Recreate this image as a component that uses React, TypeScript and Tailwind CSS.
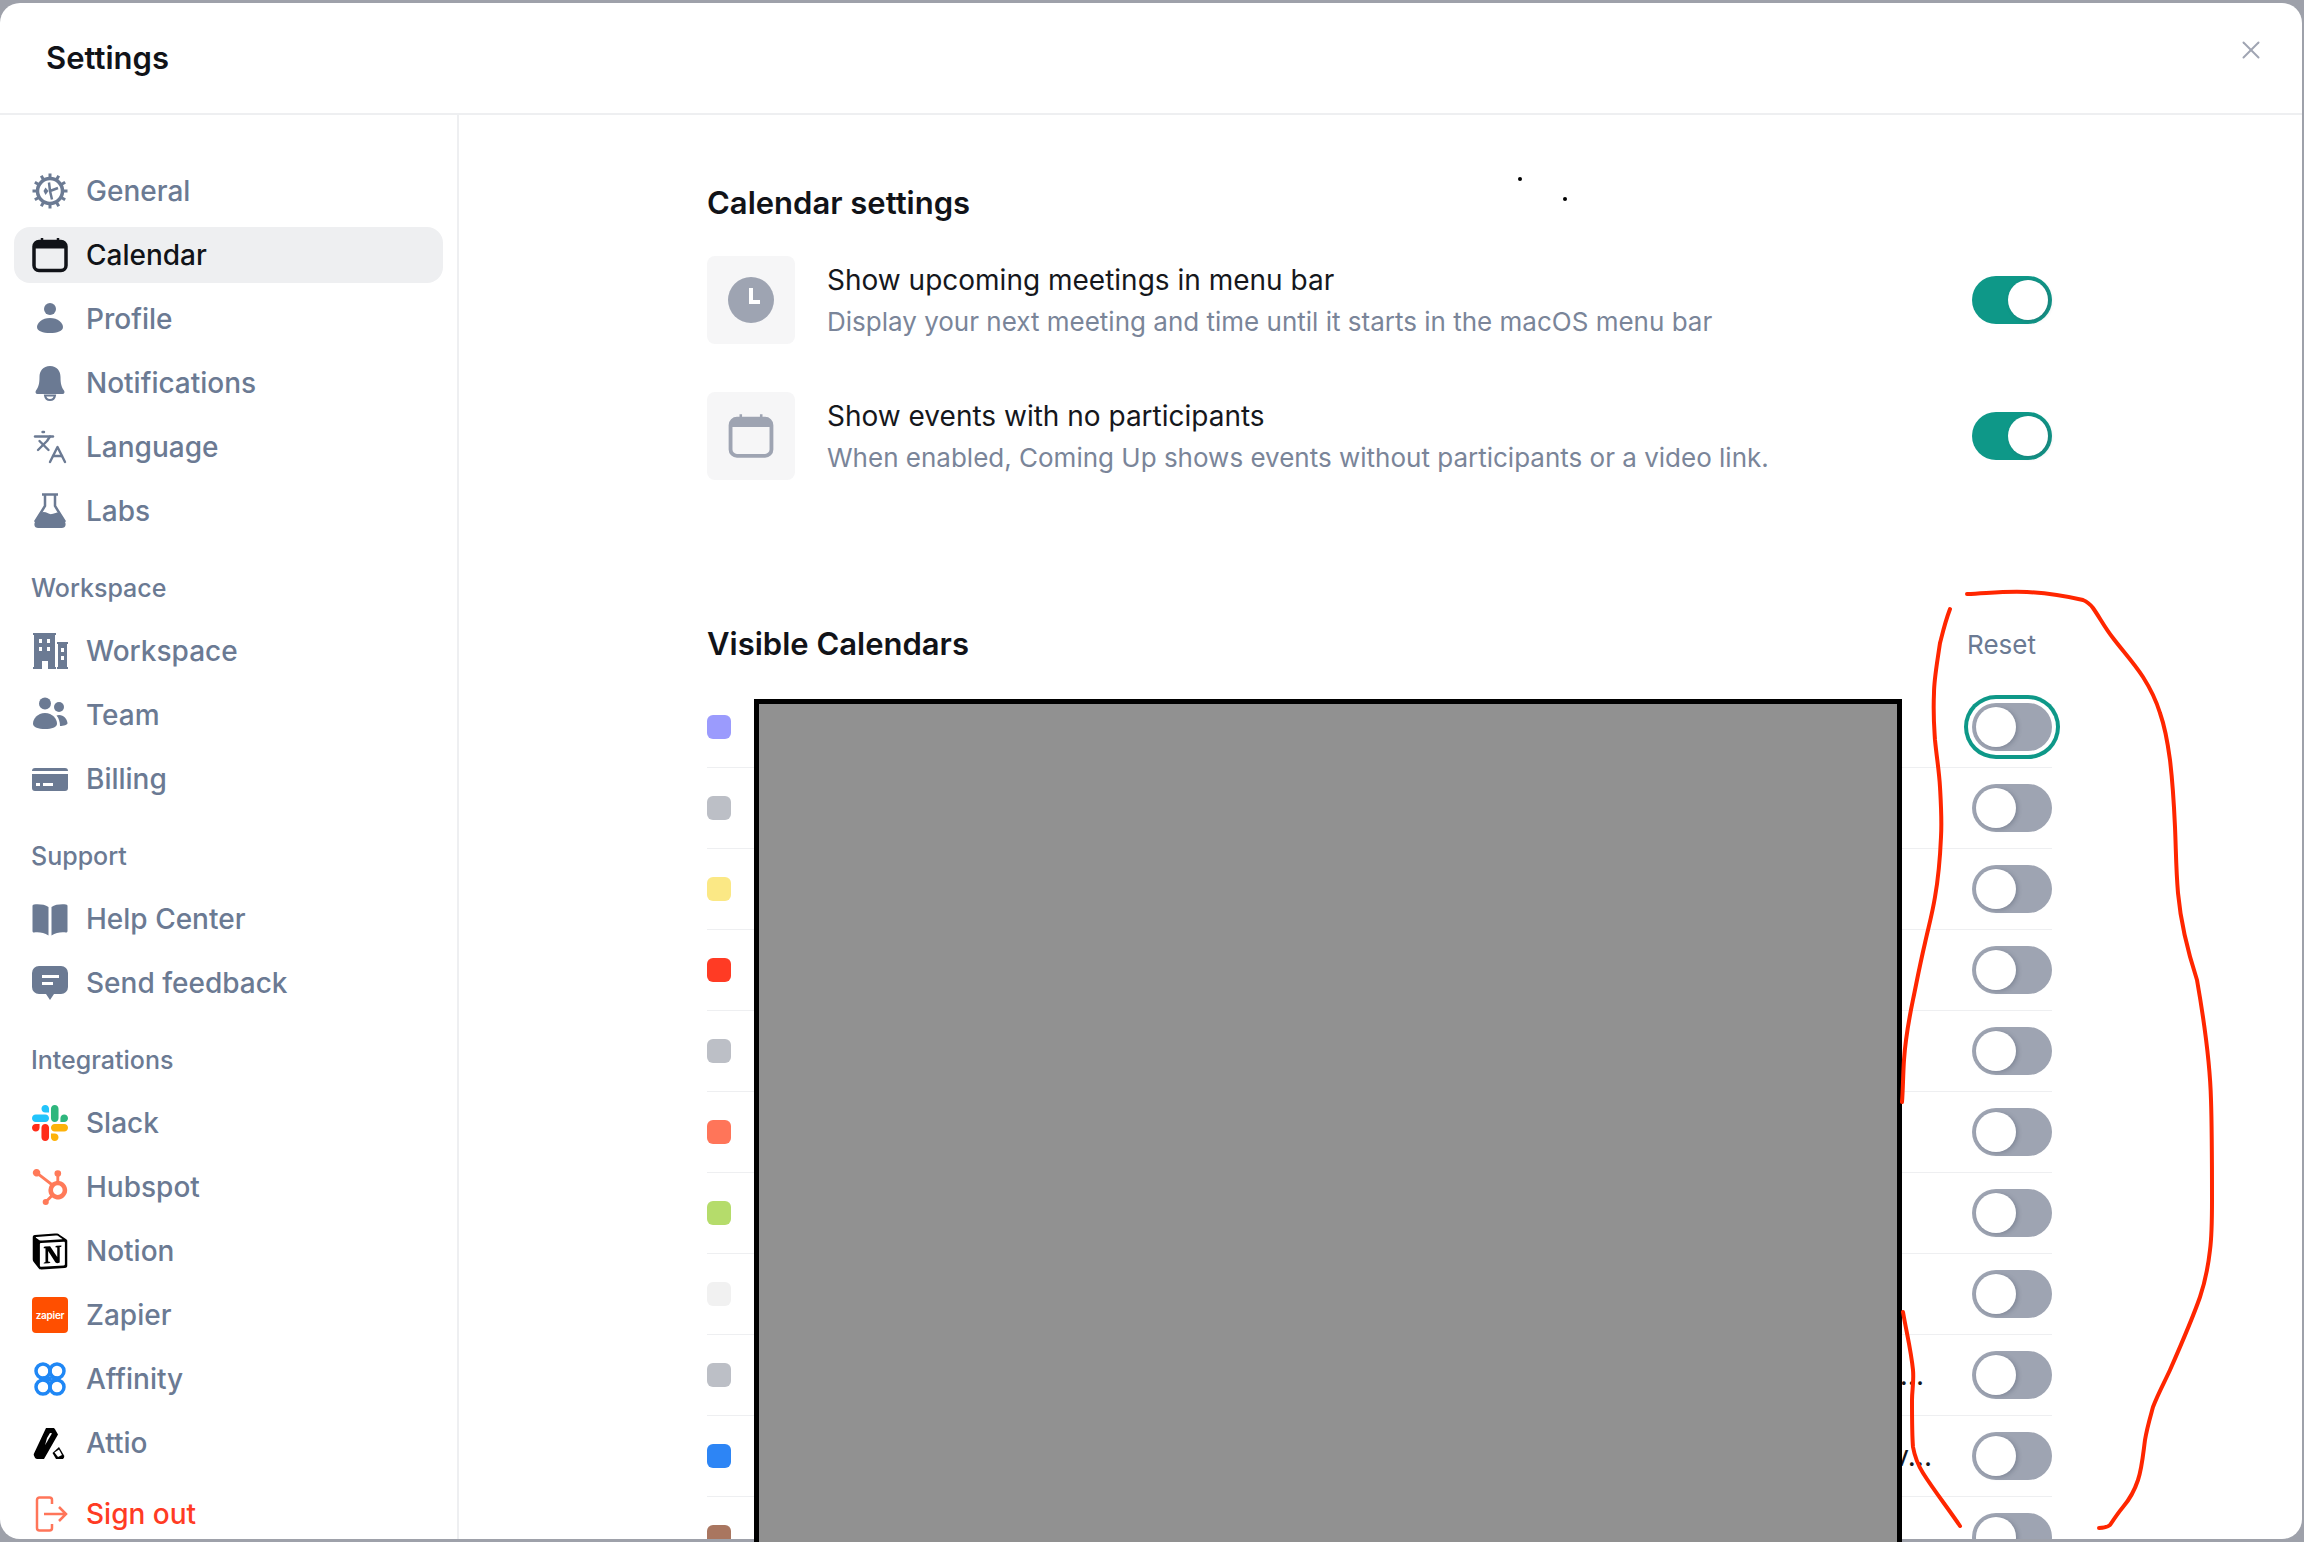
import { ReactNode } from 'react';
import { Languages, X } from 'lucide-react';
import { SiHubspot, SiNotion } from 'react-icons/si';

const svgProps = { width: 36, height: 36, viewBox: '0 0 36 36' };

const GearIcon = () => (
    <svg {...svgProps} fill="none" stroke="currentColor">
        <circle cx="18" cy="18" r="12.5" strokeWidth="3.5" />
        {[0, 30, 60, 90, 120, 150, 180, 210, 240, 270, 300, 330].map(a => (
            <line key={a} x1="18" y1="0.5" x2="18" y2="5" strokeWidth="3" transform={`rotate(${a} 18 18)`} />
        ))}
        <path d="M18 18l8-3M18 18l-1-8.5M18 18l2 8.5" strokeWidth="2.5" />
        <path d="M13.5 14.5l3 3.5-3 4-2-4z" fill="currentColor" stroke="none" />
    </svg>
);

const CalendarIcon = ({ stroke = 3.5 }: { stroke?: number }) => (
    <svg {...svgProps} fill="none" stroke="currentColor">
        <rect x="2" y="4.5" width="32" height="29" rx="5" strokeWidth={stroke} />
        <path d="M3 11V8a4 4 0 0 1 4-3h22a4 4 0 0 1 4 3v3z" fill="currentColor" stroke="none" />
        <path d="M3 10h30" strokeWidth="3" />
        <path d="M10 1v5M26 1v5" strokeWidth="2.5" />
    </svg>
);

const ProfileIcon = () => (
    <svg {...svgProps} fill="currentColor">
        <circle cx="18" cy="8" r="6" />
        <path d="M18 17c8 0 13 5 13 9 0 4-6 6-13 6S5 30 5 26c0-4 5-9 13-9z" />
    </svg>
);

const BellIcon = () => (
    <svg {...svgProps} fill="currentColor">
        <path d="M18 1c7 0 10.500 5 10.500 11 0 7 1 10 3.500 13.500 1 1.500.5 3.500-1.500 3.500H5.500C3.500 29 3 27 4 25.500 6.500 22 7.500 19 7.500 12 7.500 6 11 1 18 1z" />
        <path d="M13 30.500h10c-.5 3-2.500 4.500-5 4.500s-4.500-1.500-5-4.500z" fill="none" stroke="currentColor" strokeWidth="2" />
    </svg>
);

const FlaskIcon = () => (
    <svg {...svgProps} fill="currentColor">
        <path d="M10 1.500h16" stroke="currentColor" strokeWidth="2.500" />
        <path d="M13 2v11L3 29" fill="none" stroke="currentColor" strokeWidth="2.500" />
        <path d="M23 2v11l10 16" fill="none" stroke="currentColor" strokeWidth="2.500" />
        <path d="M8 20c6-3 8 2 12 1s6-2 8-1l5 9c1.500 3 0 6-3 6H6c-3 0-4.500-3-3-6z" />
    </svg>
);

const BuildingIcon = () => (
    <svg {...svgProps} fill="currentColor">
        <path fillRule="evenodd" d="M1 0h23v2h-1v32h1v2h-8v-8h-6v8H1v-2h1V2H1zM7 6v4h3V6zm8 0v4h3V6zM7 14v4h3v-4zm8 0v4h3v-4z" />
        <path fillRule="evenodd" d="M25 9h11v2h-1v23h1v2H25v-2h1V11h-1zm4 6v4h3v-4zm0 8v4h3v-4z" />
    </svg>
);

const TeamIcon = () => (
    <svg {...svgProps} fill="currentColor">
        <circle cx="13" cy="6.500" r="6" />
        <circle cx="27" cy="10" r="5" />
        <path d="M13 16c7.500 0 12 6 12 10.500 0 4-5.500 5.500-12 5.500S1 30.500 1 26.500C1 22 5.500 16 13 16z" />
        <path d="M27 18c5 0 8 4 8.500 8 .2 2-4 3-7.500 3 0-4-1-7.500-3.500-10.500.8-.3 1.600-.5 2.500-.5z" />
    </svg>
);

const CardIcon = () => (
    <svg width="36" height="24" viewBox="0 0 36 24" fill="currentColor">
        <path d="M0 4a3 3 0 0 1 3-3h30a3 3 0 0 1 3 3v0H0z" />
        <path fillRule="evenodd" d="M0 7h36v14a3 3 0 0 1-3 3H3a3 3 0 0 1-3-3zm4 9v3h4v-3zm7 0v3h10v-3z" />
    </svg>
);

const BookIcon = () => (
    <svg {...svgProps} fill="currentColor">
        <path d="M16.500 6C13 3.500 7 3 2 3.500c-1 .1-1.500.8-1.500 1.500v25c0 1 .8 1.500 1.500 1.500 5-.5 10 0 14.500 3z" />
        <path d="M19.500 6c3.500-2.500 9.500-3 14.500-2.500 1 .1 1.500.8 1.500 1.500v25c0 1-.8 1.500-1.500 1.500-5-.5-10 0-14.500 3z" />
    </svg>
);

const FeedbackIcon = () => (
    <svg {...svgProps} fill="currentColor">
        <path fillRule="evenodd" d="M7 1h22a7 7 0 0 1 7 7v14a7 7 0 0 1-7 7h-7l-4 6-4-6H7a7 7 0 0 1-7-7V8a7 7 0 0 1 7-7zm3 9v3h17v-3zm0 7v3h11v-3z" />
    </svg>
);

const SlackIcon = () => (
    <svg width="36" height="36" viewBox="0 0 122.8 122.8">
        <path fill="#ff2d1a" d="M25.800 77.600c0 7.100-5.800 12.900-12.900 12.900S0 84.700 0 77.600s5.800-12.900 12.900-12.900h12.900v12.900zm6.500 0c0-7.100 5.800-12.900 12.900-12.900s12.900 5.800 12.900 12.900v32.300c0 7.100-5.800 12.900-12.900 12.900s-12.900-5.800-12.900-12.900V77.600z" />
        <path fill="#22c4fb" d="M45.200 25.800c-7.100 0-12.900-5.800-12.900-12.900S38.100 0 45.200 0s12.900 5.800 12.900 12.900v12.900H45.200zm0 6.500c7.100 0 12.900 5.800 12.900 12.900s-5.800 12.900-12.900 12.900H12.900C5.800 58.100 0 52.300 0 45.200s5.800-12.900 12.900-12.900h32.300z" />
        <path fill="#2eb67d" d="M97 45.200c0-7.100 5.800-12.900 12.900-12.900s12.900 5.800 12.900 12.900-5.800 12.900-12.900 12.900H97V45.200zm-6.500 0c0 7.100-5.800 12.900-12.900 12.900s-12.900-5.800-12.900-12.900V12.900C64.700 5.800 70.500 0 77.600 0s12.900 5.800 12.900 12.900v32.300z" />
        <path fill="#fdb20a" d="M77.600 97c7.100 0 12.900 5.800 12.900 12.900s-5.800 12.900-12.900 12.900-12.900-5.800-12.900-12.900V97h12.900zm0-6.500c-7.100 0-12.900-5.800-12.900-12.900s5.800-12.900 12.900-12.900h32.300c7.100 0 12.900 5.800 12.900 12.900s-5.800 12.900-12.900 12.900H77.600z" />
    </svg>
);

const ZapierIcon = () => (
    <div className="w-[36px] h-[36px] rounded-[4px] bg-[#ff4f00] flex items-center justify-center">
        <span className="text-white text-[10px] font-semibold tracking-tight">zapier</span>
    </div>
);

const AffinityIcon = () => (
    <svg {...svgProps} fill="none" stroke="#1f87f5" strokeWidth="3.500">
        <circle cx="11" cy="10" r="7" />
        <circle cx="25" cy="10" r="7" />
        <circle cx="11" cy="26" r="7" />
        <circle cx="25" cy="26" r="7" />
        <path d="M11 17c3 0 7 4 7 1s4-1 7-1M11 19c3 0 7-4 7-1s4 1 7 1" strokeWidth="3" />
    </svg>
);

const AttioIcon = () => (
    <svg {...svgProps} fill="#000">
        <path d="M14 3h7c1 0 1.500.5 2 1.200l3 5.300-14 24.500H5c-1 0-1.500-.5-2-1.200l-1-2c-.4-.8-.4-1.400 0-2.200z" />
        <path fill="#fff" d="M15 13l3-5 2 .3-7 12z" />
        <path d="M27 22l5 8.500c.3.700.3 1.300 0 2L31 34h-7l-3.500-6z" />
        <path fill="#fff" d="M22.500 27.500l4.500-3 3 5.500-4 2z" />
    </svg>
);

const SignOutIcon = () => (
    <svg {...svgProps} fill="none" stroke="#ff7559" strokeWidth="2.500">
        <path d="M20 8V4a2.500 2.500 0 0 0-2.500-2.500h-10A2.500 2.500 0 0 0 5 4v28a2.500 2.500 0 0 0 2.500 2.500h10A2.500 2.500 0 0 0 20 32v-4" />
        <path d="M12 18h22M27 11l7 7-7 7" />
    </svg>
);

type NavItem = { label: string; icon: ReactNode; active?: boolean };

const mainItems: NavItem[] = [
    { label: 'General', icon: <GearIcon /> },
    { label: 'Calendar', icon: <CalendarIcon />, active: true },
    { label: 'Profile', icon: <ProfileIcon /> },
    { label: 'Notifications', icon: <BellIcon /> },
    { label: 'Language', icon: <Languages size={38} strokeWidth={1.6} /> },
    { label: 'Labs', icon: <FlaskIcon /> },
];

const workspaceItems: NavItem[] = [
    { label: 'Workspace', icon: <BuildingIcon /> },
    { label: 'Team', icon: <TeamIcon /> },
    { label: 'Billing', icon: <CardIcon /> },
];

const supportItems: NavItem[] = [
    { label: 'Help Center', icon: <BookIcon /> },
    { label: 'Send feedback', icon: <FeedbackIcon /> },
];

const integrationItems: NavItem[] = [
    { label: 'Slack', icon: <SlackIcon /> },
    { label: 'Hubspot', icon: <SiHubspot size={40} color="#ff7a59" /> },
    { label: 'Notion', icon: <SiNotion size={39} color="#000" /> },
    { label: 'Zapier', icon: <ZapierIcon /> },
    { label: 'Affinity', icon: <AffinityIcon /> },
    { label: 'Attio', icon: <AttioIcon /> },
];

const calendars = [
    { color: 'bg-[#9b9bfd]' },
    { color: 'bg-[#bcbfc6]' },
    { color: 'bg-[#fbe885]' },
    { color: 'bg-[#ff3b24]' },
    { color: 'bg-[#bcbfc6]' },
    { color: 'bg-[#ff7559]' },
    { color: 'bg-[#b5dc6b]' },
    { color: 'bg-[#f1f1f1]' },
    { color: 'bg-[#bcbfc6]', tail: 't...', tailClass: 'mr-[48px]' },
    { color: 'bg-[#2d85f5]', tail: 'v...', tailClass: 'mr-[40px]' },
    { color: 'bg-[#a97660]' },
];

const NavRow = ({ item }: { item: NavItem }) => (
    <div className={`h-[56px] shrink-0 mx-[14px] px-[18px] flex items-center gap-[18px] rounded-[16px] text-[28px] font-medium ${item.active ? 'bg-[#eeeff1] text-[#111318]' : 'text-[#6b7a93]'}`}>
        <div className="w-[36px] h-[36px] shrink-0 flex items-center justify-center">{item.icon}</div>
        <span>{item.label}</span>
    </div>
);

const NavGroup = ({ title, items }: { title?: string; items: NavItem[] }) => (
    <div className="flex flex-col">
        {title && <div className="h-[36px] mt-[32px] mb-[16px] px-[31px] flex items-center text-[25px] font-medium text-[#6b7a93]">{title}</div>}
        <div className="flex flex-col gap-[8px]">
            {items.map(item => <NavRow key={item.label} item={item} />)}
        </div>
    </div>
);

const Toggle = ({ on, focused }: { on?: boolean; focused?: boolean }) => (
    <div className={`w-[80px] h-[48px] shrink-0 rounded-full p-[4px] flex ${on ? 'bg-[#0e9888] justify-end' : 'bg-[#9ea4b2] justify-start'} ${focused ? 'ring-4 ring-[#0e9888] ring-offset-4 ring-offset-white' : ''}`}>
        <div className="w-[40px] h-[40px] rounded-full bg-white shadow-[2px_1px_4px_rgba(60,70,90,0.3)]" />
    </div>
);

const SettingRow = ({ icon, title, text }: { icon: ReactNode; title: string; text: string }) => (
    <div className="flex items-center h-[88px]">
        <div className="w-[88px] h-[88px] shrink-0 rounded-[8px] bg-[#f6f6f7] flex items-center justify-center text-[#9ea4b2]">{icon}</div>
        <div className="ml-[32px] flex-1 flex flex-col gap-[9px]">
            <div className="text-[28px] leading-[34px] text-[#15171c]">{title}</div>
            <div className="text-[26px] leading-[32px] text-[#7a8599]">{text}</div>
        </div>
        <Toggle on />
    </div>
);

const ClockIcon = () => (
    <svg width="46" height="46" viewBox="0 0 46 46">
        <circle cx="23" cy="23" r="23" fill="#9ea4b2" />
        <path d="M23 11v14h9" fill="none" stroke="#fff" strokeWidth="4" />
    </svg>
);

const Scribble = () => (
    <svg className="absolute top-0 left-0 pointer-events-none" width="2304" height="1542" fill="none" stroke="#ff2600" strokeWidth="4" strokeLinecap="round" strokeLinejoin="round">
        <path d="M1950 609C1944 625 1941 640 1940 643C1936 670 1934 680 1934 693C1933 715 1934 725 1935 740C1937 760 1939 770 1940 787C1941 805 1942 820 1941 837C1940 860 1938 880 1935 897C1932 915 1929 925 1925 943C1921 960 1919 970 1916 985C1910 1015 1906 1030 1904 1060C1903 1075 1903 1090 1902 1102" />
        <path d="M1903 1312C1907 1335 1911 1350 1913 1370C1914 1382 1912 1390 1912 1400C1912 1420 1912 1435 1913 1447C1915 1458 1918 1465 1923 1473C1935 1492 1948 1508 1960 1526" />
        <path d="M1967 594C1990 593 2005 591 2027 592C2050 593 2070 597 2083 600C2088 602 2090 604 2093 608C2100 618 2105 628 2113 638C2122 650 2134 663 2143 677C2150 688 2156 700 2160 713C2166 730 2168 745 2170 760C2173 785 2174 805 2175 827C2176 850 2176 870 2178 893C2180 915 2184 940 2197 980C2204 1020 2210 1060 2211 1100C2212 1130 2212 1165 2212 1200C2212 1220 2212 1235 2210 1250C2208 1268 2205 1282 2200 1297C2192 1320 2181 1345 2170 1370C2164 1383 2158 1394 2153 1407C2150 1418 2147 1428 2145 1440C2143 1455 2142 1468 2138 1480C2134 1492 2129 1500 2123 1507C2118 1513 2114 1519 2110 1525C2106 1528 2103 1528 2099 1528" />
    </svg>
);

export default function App() {
    return (
        <div className="relative w-full h-[1542px] overflow-hidden bg-[#9ea1aa] pt-[3px] pr-[2px] pb-[3px] font-['Inter',sans-serif]">
            <div className="h-full rounded-[20px] bg-white overflow-hidden flex flex-col">
                <header className="h-[112px] shrink-0 border-b-2 border-[#eeeff1] flex items-center justify-between pl-[46px] pr-[36px]">
                    <h1 className="text-[31px] font-semibold text-[#111318]">Settings</h1>
                    <X className="text-[#a0a5b3] -mt-[16px]" size={30} strokeWidth={1.6} />
                </header>
                <div className="flex-1 flex min-h-0">
                    <aside className="w-[459px] shrink-0 border-r-2 border-[#eeeff1] pt-[48px] flex flex-col">
                        <NavGroup items={mainItems} />
                        <NavGroup title="Workspace" items={workspaceItems} />
                        <NavGroup title="Support" items={supportItems} />
                        <NavGroup title="Integrations" items={integrationItems} />
                        <div className="h-[56px] shrink-0 mt-[15px] mx-[14px] px-[18px] flex items-center gap-[18px] text-[28px] font-medium text-[#ff3b24]">
                            <SignOutIcon />
                            <span>Sign out</span>
                        </div>
                    </aside>
                    <main className="flex-1 min-w-0 pl-[248px] pr-[250px] pt-[68px]">
                        <h2 className="h-[40px] flex items-center text-[31px] font-semibold text-[#111318]">Calendar settings</h2>
                        <div className="mt-[33px] flex flex-col gap-[48px]">
                            <SettingRow icon={<ClockIcon />} title="Show upcoming meetings in menu bar" text="Display your next meeting and time until it starts in the macOS menu bar" />
                            <SettingRow icon={<div className="w-[46px] h-[46px] flex items-center justify-center"><svg width="46" height="46" viewBox="0 0 36 36" fill="none" stroke="currentColor"><rect x="2" y="4.500" width="32" height="29" rx="5" strokeWidth="3" /><path d="M3 11V8a4 4 0 0 1 4-3h22a4 4 0 0 1 4 3v3z" fill="currentColor" stroke="none" /><path d="M10 1v5M26 1v5" strokeWidth="2" /></svg></div>} title="Show events with no participants" text="When enabled, Coming Up shows events without participants or a video link." />
                        </div>
                        <div className="mt-[144px] mb-[23px] h-[40px] flex items-center justify-between">
                            <h2 className="text-[31px] font-semibold text-[#111318]">Visible Calendars</h2>
                            <span className="pr-[16px] text-[26px] text-[#6b7a93]">Reset</span>
                        </div>
                        <div className="flex flex-col">
                            {calendars.map((cal, i) => (
                                <div key={i} className="h-[81px] shrink-0 border-b border-[#eeeff1] flex items-center">
                                    <div className={`w-[24px] h-[24px] rounded-[6px] ${cal.color}`} />
                                    {cal.tail && <span className={`ml-auto text-[28px] text-[#15171c] ${cal.tailClass}`}>{cal.tail}</span>}
                                    <div className={cal.tail ? '' : 'ml-auto'}>
                                        <Toggle focused={i === 0} />
                                    </div>
                                </div>
                            ))}
                        </div>
                    </main>
                </div>
            </div>
            {/* redaction block from the screenshot */}
            <div className="absolute left-[754px] top-[699px] w-[1148px] h-[860px] border-[5px] border-black bg-[#919191]" />
            <Scribble />
            <div className="absolute left-[1518px] top-[177px] w-[4px] h-[4px] rounded-full bg-black" />
            <div className="absolute left-[1563px] top-[197px] w-[4px] h-[4px] rounded-full bg-black" />
        </div>
    );
}
